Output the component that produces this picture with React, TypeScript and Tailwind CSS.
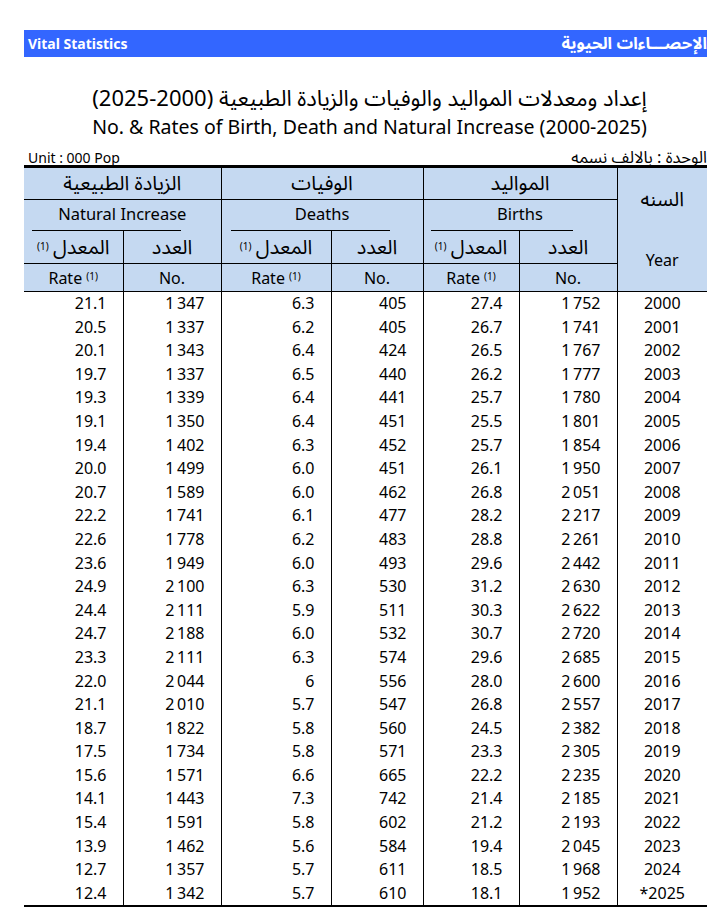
const rows: string[][] = [
  ["21.1", "1 347", "6.3", "405", "27.4", "1 752", "2000"],
  ["20.5", "1 337", "6.2", "405", "26.7", "1 741", "2001"],
  ["20.1", "1 343", "6.4", "424", "26.5", "1 767", "2002"],
  ["19.7", "1 337", "6.5", "440", "26.2", "1 777", "2003"],
  ["19.3", "1 339", "6.4", "441", "25.7", "1 780", "2004"],
  ["19.1", "1 350", "6.4", "451", "25.5", "1 801", "2005"],
  ["19.4", "1 402", "6.3", "452", "25.7", "1 854", "2006"],
  ["20.0", "1 499", "6.0", "451", "26.1", "1 950", "2007"],
  ["20.7", "1 589", "6.0", "462", "26.8", "2 051", "2008"],
  ["22.2", "1 741", "6.1", "477", "28.2", "2 217", "2009"],
  ["22.6", "1 778", "6.2", "483", "28.8", "2 261", "2010"],
  ["23.6", "1 949", "6.0", "493", "29.6", "2 442", "2011"],
  ["24.9", "2 100", "6.3", "530", "31.2", "2 630", "2012"],
  ["24.4", "2 111", "5.9", "511", "30.3", "2 622", "2013"],
  ["24.7", "2 188", "6.0", "532", "30.7", "2 720", "2014"],
  ["23.3", "2 111", "6.3", "574", "29.6", "2 685", "2015"],
  ["22.0", "2 044", "6", "556", "28.0", "2 600", "2016"],
  ["21.1", "2 010", "5.7", "547", "26.8", "2 557", "2017"],
  ["18.7", "1 822", "5.8", "560", "24.5", "2 382", "2018"],
  ["17.5", "1 734", "5.8", "571", "23.3", "2 305", "2019"],
  ["15.6", "1 571", "6.6", "665", "22.2", "2 235", "2020"],
  ["14.1", "1 443", "7.3", "742", "21.4", "2 185", "2021"],
  ["15.4", "1 591", "5.8", "602", "21.2", "2 193", "2022"],
  ["13.9", "1 462", "5.6", "584", "19.4", "2 045", "2023"],
  ["12.7", "1 357", "5.7", "611", "18.5", "1 968", "2024"],
  ["12.4", "1 342", "5.7", "610", "18.1", "1 952", "*2025"],
];

// numbers use a thin space as thousands separator
const fmt = (s: string) => s.replace(" ", "\u2009");

const groups = [
  { ar: "الزيادة الطبيعية", en: "Natural Increase", line: "ml-[8px] mr-[40px]" },
  { ar: "الوفيات", en: "Deaths", line: "ml-[9px] mr-[33px]" },
  { ar: "المواليد", en: "Births", line: "ml-[7px] mr-[44px]" },
];

const Sup = () => <sup className="text-[10px] relative -top-[4px]">(1)</sup>;

const App = () => {
  return (
    <div className="min-h-screen bg-white pt-[30px] pl-[24px] text-black font-['Noto_Sans','Noto_Sans_Arabic','DejaVu_Sans',sans-serif]">
      <div className="h-[27px] bg-[#3366ff] flex items-center justify-between text-white font-bold text-[14px]">
        <span className="pl-1">Vital Statistics</span>
        <span dir="rtl" className="text-[16.5px]">الإحصـــاءات الحيوية</span>
      </div>

      <div className="mt-[25px] pl-2 text-center leading-[30px]">
        <div dir="rtl" className="text-[22px]">إعداد ومعدلات المواليد والوفيات والزيادة الطبيعية (2000-2025)</div>
        <div className="text-[19.5px]">No. &amp; Rates of Birth, Death and Natural Increase (2000-2025)</div>
      </div>

      <div className="mt-[7px] h-[16px] flex items-center justify-between">
        <span className="pl-1 text-[14px]">Unit : 000 Pop</span>
        <span dir="rtl" className="text-[16.5px]">الوحدة : بالالف نسمه</span>
      </div>

      <div className="h-[3px] bg-black" />

      <table className="w-[683px] table-fixed border-collapse text-[16px]">
        <colgroup>
          <col className="w-[99px]" />
          <col className="w-[98px]" />
          <col className="w-[110px]" />
          <col className="w-[92px]" />
          <col className="w-[96px]" />
          <col className="w-[98px]" />
          <col className="w-[90px]" />
        </colgroup>
        <thead className="bg-[#c5d9f1]">
          <tr className="h-[31px]">
            {groups.map((g, i) => (
              <th
                key={g.en}
                colSpan={2}
                dir="rtl"
                className={`font-normal text-[20px] leading-none border-b border-black ${i > 0 ? "border-l" : ""}`}
              >
                {g.ar}
              </th>
            ))}
            <th rowSpan={4} className="font-normal border-l border-b border-black p-0 align-top">
              <div className="h-[62px] flex items-center justify-center text-[20px]" dir="rtl">السنه</div>
              <div className="h-[60px] flex items-center justify-center">Year</div>
            </th>
          </tr>
          <tr>
            {groups.map((g, i) => (
              <th
                key={g.en}
                colSpan={2}
                className={`font-normal text-[16.5px] p-0 border-black ${i > 0 ? "border-l" : ""}`}
              >
                <div className="h-[31px] flex flex-col">
                  <div className="flex-1 flex items-center justify-center">{g.en}</div>
                  <div className={`h-px bg-black ${g.line}`} />
                </div>
              </th>
            ))}
          </tr>
          <tr className="h-[33px]">
            {groups.map((g, i) => [
              <th key={g.en + "r"} dir="rtl" className={`font-normal leading-none border-b border-black ${i > 0 ? "border-l" : ""}`}>
                <span className="text-[20px]">المعدل</span> <Sup />
              </th>,
              <th key={g.en + "n"} dir="rtl" className="font-normal text-[20px] leading-none border-b border-l border-black">
                العدد
              </th>,
            ])}
          </tr>
          <tr className="h-[28px]">
            {groups.map((g, i) => [
              <th key={g.en + "r"} className={`font-normal border-b border-black ${i > 0 ? "border-l" : ""}`}>
                Rate <Sup />
              </th>,
              <th key={g.en + "n"} className="font-normal border-b border-l border-black">
                No.
              </th>,
            ])}
          </tr>
        </thead>
        <tbody>
          {rows.map((r) => (
            <tr key={r[6]} className="h-[23.6px] leading-[23.6px]">
              {r.slice(0, 6).map((v, j) => (
                <td key={j} className={`p-0 pr-4 text-right border-black ${j > 0 ? "border-l" : ""}`}>
                  {fmt(v)}
                </td>
              ))}
              <td className="p-0 text-center border-l border-black">{r[6]}</td>
            </tr>
          ))}
        </tbody>
      </table>

      <div className="w-[683px] h-[3px] bg-black" />
    </div>
  );
};

export default App;
